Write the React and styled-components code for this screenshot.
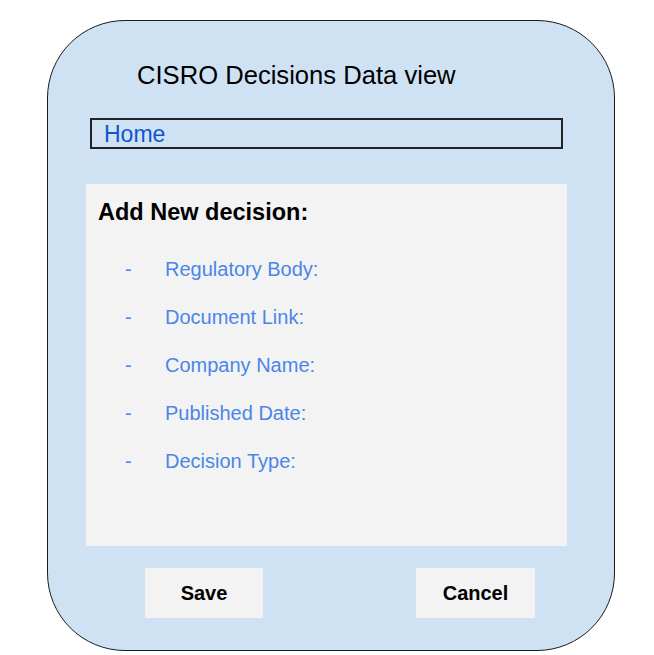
import React from 'react';
import styled, { createGlobalStyle } from 'styled-components';

const GlobalStyle = createGlobalStyle`
  * {
    box-sizing: border-box;
  }
  body {
    margin: 0;
    background: #ffffff;
    font-family: 'Liberation Sans', Arial, sans-serif;
  }
`;

const Frame = styled.div`
  margin: 20px 0 0 47px;
  width: 568px;
  height: 631px;
  background: #cfe2f3;
  border: 1.5px solid #1a1a1a;
  border-radius: 78px;
  display: flex;
  flex-direction: column;
  padding-top: 39px;
`;

const Title = styled.h1`
  margin: 0 0 0 89px;
  font-size: 25.6px;
  line-height: 30px;
  font-weight: 400;
  color: #000000;
`;

const NavBox = styled.div`
  margin: 28px 0 0 42px;
  width: 473px;
  height: 31px;
  border: 2px solid #222222;
  padding: 2px 0 0 12px;
  display: flex;
  align-items: center;
`;

const NavLink = styled.a`
  font-size: 23px;
  color: #1155cc;
  text-decoration: none;
`;

const Panel = styled.section`
  margin: 35px 0 0 38px;
  width: 481px;
  height: 362px;
  background: #f3f3f3;
  padding: 14px 0 0 12px;
`;

const Heading = styled.h2`
  margin: 0;
  font-size: 23.5px;
  line-height: 28px;
  font-weight: 700;
  color: #000000;
`;

const FieldList = styled.ul`
  list-style: none;
  margin: 19px 0 0 0;
  padding: 0 0 0 27px;
`;

const Field = styled.li`
  display: grid;
  grid-template-columns: 40px auto;
  height: 48.2px;
  align-items: center;
  font-size: 20px;
  color: #4a86e8;
`;

const ButtonRow = styled.div`
  margin: 22px 0 0 97px;
  display: flex;
  gap: 153px;
`;

const Button = styled.button`
  width: ${({ $w }) => $w}px;
  height: 50px;
  border: none;
  background: #f3f3f3;
  font-family: 'Liberation Sans', Arial, sans-serif;
  font-size: 20px;
  font-weight: 700;
  color: #000000;
  padding: 0;
  cursor: pointer;
`;

const fields = [
  'Regulatory Body:',
  'Document Link:',
  'Company Name:',
  'Published Date:',
  'Decision Type:',
];

export default function App() {
  return (
    <>
      <GlobalStyle />
      <Frame>
        <Title>CISRO Decisions Data view</Title>
        <NavBox>
          <NavLink href="#">Home</NavLink>
        </NavBox>
        <Panel>
          <Heading>Add New decision:</Heading>
          <FieldList>
            {fields.map((f) => (
              <Field key={f}>
                <span>-</span>
                <span>{f}</span>
              </Field>
            ))}
          </FieldList>
        </Panel>
        <ButtonRow>
          <Button $w={118}>Save</Button>
          <Button $w={119}>Cancel</Button>
        </ButtonRow>
      </Frame>
    </>
  );
}
